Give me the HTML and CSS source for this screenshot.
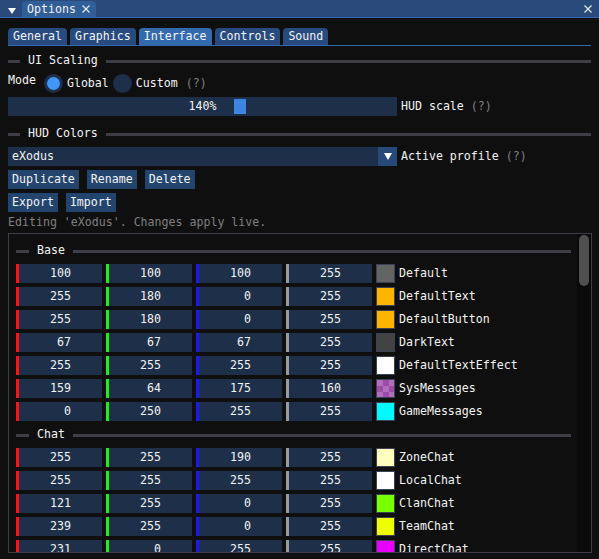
FILE: index.html
```html
<!DOCTYPE html>
<html>
<head>
<meta charset="utf-8">
<link rel="stylesheet" href="styles.css">
</head>
<body>
<div class="window">
  <div class="titlebar">
    <span class="collapse"></span>
    <div class="dock-tab">
      <span>Options</span>
      <svg class="xicon" width="8" height="8" viewBox="0 0 8 8"><path d="M0.5 0.5L7.5 7.5M7.5 0.5L0.5 7.5" stroke="#dfe6ef" stroke-width="1.3"/></svg>
    </div>
    <svg class="close" width="8" height="8" viewBox="0 0 8 8"><path d="M0.5 0.5L7.5 7.5M7.5 0.5L0.5 7.5" stroke="#dfe6ef" stroke-width="1.3"/></svg>
  </div>

  <div class="content">
    <div class="tabbar">
      <div class="tab">General</div>
      <div class="tab">Graphics</div>
      <div class="tab active">Interface</div>
      <div class="tab">Controls</div>
      <div class="tab">Sound</div>
    </div>

    <div class="septext top-sep"><span class="sl-left"></span><span class="st">UI Scaling</span><span class="sl"></span></div>

    <div class="mode-row">
      <span class="mode-label">Mode</span>
      <span class="radio on"><span class="dot"></span></span>
      <span class="radio-label">Global</span>
      <span class="radio"></span>
      <span class="radio-label">Custom</span>
      <span class="radio-label dim help">(?)</span>
    </div>

    <div class="frame-row">
      <div class="slider"><span>140%</span><div class="grab"></div></div>
      <span class="side-label">HUD scale <span class="dim">(?)</span></span>
    </div>

    <div class="septext sep2"><span class="sl-left"></span><span class="st">HUD Colors</span><span class="sl"></span></div>

    <div class="frame-row">
      <div class="combo"><span class="combo-text">eXodus</span><span class="combo-btn"><span class="tri"></span></span></div>
      <span class="side-label">Active profile <span class="dim">(?)</span></span>
    </div>

    <div class="btn-row">
      <span class="btn">Duplicate</span>
      <span class="btn">Rename</span>
      <span class="btn">Delete</span>
    </div>
    <div class="btn-row">
      <span class="btn">Export</span>
      <span class="btn">Import</span>
    </div>

    <div class="note">Editing 'eXodus'. Changes apply live.</div>

    <div class="child">
      <div class="child-main">
        <div class="septext child-sep"><span class="sl-left"></span><span class="st">Base</span><span class="sl"></span></div>

        <div class="crow"><span class="bar r"></span><span class="inp">100</span><span class="bar g"></span><span class="inp">100</span><span class="bar b"></span><span class="inp">100</span><span class="bar a"></span><span class="inp">255</span><span class="sw c-default"></span><span class="clabel">Default</span></div>
        <div class="crow"><span class="bar r"></span><span class="inp">255</span><span class="bar g"></span><span class="inp">180</span><span class="bar b"></span><span class="inp">  0</span><span class="bar a"></span><span class="inp">255</span><span class="sw c-orange"></span><span class="clabel">DefaultText</span></div>
        <div class="crow"><span class="bar r"></span><span class="inp">255</span><span class="bar g"></span><span class="inp">180</span><span class="bar b"></span><span class="inp">  0</span><span class="bar a"></span><span class="inp">255</span><span class="sw c-orange"></span><span class="clabel">DefaultButton</span></div>
        <div class="crow"><span class="bar r"></span><span class="inp"> 67</span><span class="bar g"></span><span class="inp"> 67</span><span class="bar b"></span><span class="inp"> 67</span><span class="bar a"></span><span class="inp">255</span><span class="sw c-dark"></span><span class="clabel">DarkText</span></div>
        <div class="crow"><span class="bar r"></span><span class="inp">255</span><span class="bar g"></span><span class="inp">255</span><span class="bar b"></span><span class="inp">255</span><span class="bar a"></span><span class="inp">255</span><span class="sw c-white"></span><span class="clabel">DefaultTextEffect</span></div>
        <div class="crow"><span class="bar r"></span><span class="inp">159</span><span class="bar g"></span><span class="inp"> 64</span><span class="bar b"></span><span class="inp">175</span><span class="bar a"></span><span class="inp">160</span><span class="sw c-sys"></span><span class="clabel">SysMessages</span></div>
        <div class="crow"><span class="bar r"></span><span class="inp">  0</span><span class="bar g"></span><span class="inp">250</span><span class="bar b"></span><span class="inp">255</span><span class="bar a"></span><span class="inp">255</span><span class="sw c-cyan"></span><span class="clabel">GameMessages</span></div>

        <div class="septext child-sep2"><span class="sl-left"></span><span class="st">Chat</span><span class="sl"></span></div>

        <div class="crow"><span class="bar r"></span><span class="inp">255</span><span class="bar g"></span><span class="inp">255</span><span class="bar b"></span><span class="inp">190</span><span class="bar a"></span><span class="inp">255</span><span class="sw c-zone"></span><span class="clabel">ZoneChat</span></div>
        <div class="crow"><span class="bar r"></span><span class="inp">255</span><span class="bar g"></span><span class="inp">255</span><span class="bar b"></span><span class="inp">255</span><span class="bar a"></span><span class="inp">255</span><span class="sw c-white"></span><span class="clabel">LocalChat</span></div>
        <div class="crow"><span class="bar r"></span><span class="inp">121</span><span class="bar g"></span><span class="inp">255</span><span class="bar b"></span><span class="inp">  0</span><span class="bar a"></span><span class="inp">255</span><span class="sw c-clan"></span><span class="clabel">ClanChat</span></div>
        <div class="crow"><span class="bar r"></span><span class="inp">239</span><span class="bar g"></span><span class="inp">255</span><span class="bar b"></span><span class="inp">  0</span><span class="bar a"></span><span class="inp">255</span><span class="sw c-team"></span><span class="clabel">TeamChat</span></div>
        <div class="crow"><span class="bar r"></span><span class="inp">231</span><span class="bar g"></span><span class="inp">  0</span><span class="bar b"></span><span class="inp">255</span><span class="bar a"></span><span class="inp">255</span><span class="sw c-direct"></span><span class="clabel">DirectChat</span></div>
      </div>
      <div class="scrollbar"><div class="thumb"></div></div>
    </div>
  </div>
</div>
</body>
</html>
```
FILE: styles.css
```css
* { box-sizing: border-box; }

body {
  margin: 0;
  width: 599px;
  height: 559px;
  overflow: hidden;
  background: #0f0f0f;
  color: #f4f4f4;
  font-family: "DejaVu Sans Mono", "Liberation Mono", monospace;
  font-size: 11.6px;
  line-height: 13px;
}

.window { width: 599px; height: 559px; }

.titlebar {
  height: 18px;
  background: #294a7a;
  border-bottom: 1px solid #3369ad;
  display: flex;
  align-items: flex-end;
}

.collapse {
  width: 0;
  height: 0;
  border-left: 4px solid transparent;
  border-right: 4px solid transparent;
  border-top: 6px solid #ffffff;
  margin: 0 6px 3px 8px;
}

.dock-tab {
  height: 16px;
  width: 74px;
  background: #2f5e99;
  border-radius: 4px 4px 0 0;
  padding: 0 5px;
  display: flex;
  align-items: center;
  gap: 6px;
}

.xicon { display: block; }

.close {
  display: block;
  margin-left: auto;
  margin-right: 7px;
  align-self: center;
}

.content { padding: 0 8px; }

.tabbar {
  margin-top: 10px;
  height: 18px;
  display: flex;
  gap: 3px;
  border-bottom: 1px solid #3369ad;
}

.tab {
  height: 17px;
  padding: 0 5px;
  line-height: 17px;
  background: #274b7e;
  border-radius: 4px 4px 0 0;
}

.tab.active { background: #3369ad; }

.septext {
  height: 19px;
  display: flex;
  align-items: center;
}

.sl-left, .sl {
  height: 3px;
  background: #3e3e47;
  margin-top: 2px;
}

.sl-left { width: 12px; }
.sl { flex: 1; }
.st { margin: 0 8px; }

.top-sep { margin-top: 5px; }
.sep2 { margin-top: 8px; }

.mode-row {
  margin-top: 4px;
  height: 19px;
  display: flex;
  align-items: flex-start;
}

.mode-label { line-height: 13px; margin-right: 8px; }

.radio {
  width: 19px;
  height: 19px;
  border-radius: 50%;
  background: #1d2f49;
  display: flex;
  align-items: center;
  justify-content: center;
}

.radio .dot {
  width: 13px;
  height: 13px;
  border-radius: 50%;
  background: #4296fa;
}

.radio-label {
  line-height: 19px;
  margin-left: 4px;
  margin-right: 4px;
}

.help { margin-left: 4px; }

.dim { color: #808080; }

.frame-row {
  margin-top: 4px;
  height: 19px;
  display: flex;
  align-items: center;
}

.slider {
  position: relative;
  width: 389px;
  height: 19px;
  background: #1d2f49;
  text-align: center;
  line-height: 19px;
}

.grab {
  position: absolute;
  left: 226px;
  top: 2px;
  width: 12px;
  height: 15px;
  background: #3d85e0;
}

.side-label { margin-left: 4px; line-height: 19px; }

.combo {
  width: 389px;
  height: 19px;
  background: #1d2f49;
  display: flex;
}

.combo-text {
  flex: 1;
  padding-left: 4px;
  line-height: 19px;
}

.combo-btn {
  width: 19px;
  height: 19px;
  background: #26497a;
  display: flex;
  align-items: center;
  justify-content: center;
}

.tri {
  width: 0;
  height: 0;
  border-left: 4.5px solid transparent;
  border-right: 4.5px solid transparent;
  border-top: 7px solid #ffffff;
}

.btn-row {
  margin-top: 4px;
  display: flex;
  gap: 8px;
}

.btn {
  height: 19px;
  line-height: 19px;
  padding: 0 4px;
  background: #23456d;
}

.note {
  margin-top: 4px;
  height: 13px;
  color: #808080;
}

.child {
  margin-top: 4px;
  width: 584px;
  height: 320px;
  border: 1px solid #3e3e47;
  display: flex;
  overflow: hidden;
}

.child-main {
  flex: 1;
  padding: 7px 6px 0 7px;
  overflow: hidden;
}

.child-sep { margin-top: 0; }
.child-sep2 { margin-top: 4px; }
.child-sep .sl-left, .child-sep2 .sl-left { width: 13px; }

.crow {
  margin-top: 4px;
  height: 19px;
  display: flex;
  align-items: stretch;
}

.bar { width: 3px; }
.bar.r { background: #f01818; }
.bar.g { background: #18f018; }
.bar.b { background: #1818f8; }
.bar.a { background: #9a9a9a; }

.inp {
  width: 83px;
  margin-right: 4px;
  background: #1d2f49;
  text-align: center;
  line-height: 19px;
  white-space: pre;
}

.sw {
  width: 19px;
  height: 19px;
  border: 1px solid #3a4456;
}

.c-default { background: #646464; }
.c-orange { background: #ffb400; }
.c-dark { background: #434343; }
.c-white { background: #ffffff; }
.c-cyan { background: #00faff; }
.c-zone { background: #ffffbe; }
.c-clan { background: #79ff00; }
.c-team { background: #efff00; }
.c-direct { background: #e700ff; }
.c-sys {
  background: conic-gradient(#9c4ca8 25%, #b46cbe 0 50%, #9c4ca8 0 75%, #b46cbe 0) 0 0 / 12px 12px;
}

.clabel {
  margin-left: 4px;
  line-height: 19px;
}

.scrollbar {
  width: 14px;
  background: #0a0a0a;
  padding: 1px 2px 0 2px;
}

.thumb {
  height: 51px;
  background: #4f4f4f;
  border-radius: 5px;
}
```
